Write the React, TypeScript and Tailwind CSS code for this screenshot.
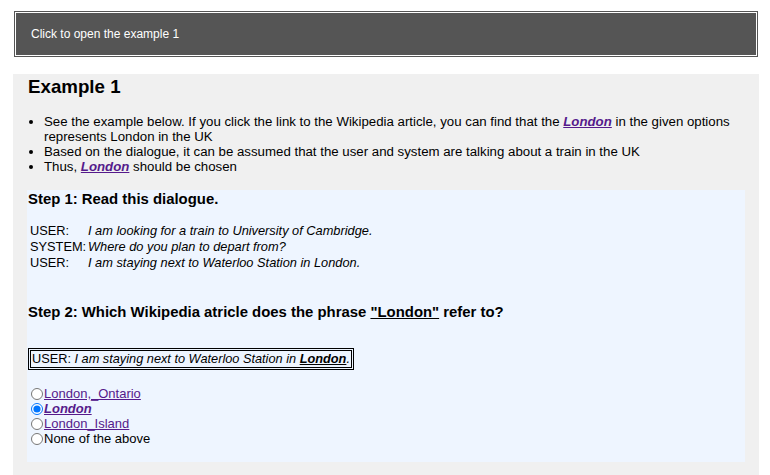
const DIALOGUE = [
  { speaker: 'USER:', text: 'I am looking for a train to University of Cambridge.' },
  { speaker: 'SYSTEM:', text: 'Where do you plan to depart from?' },
  { speaker: 'USER:', text: 'I am staying next to Waterloo Station in London.' },
];

const OPTIONS = [
  { id: 'opt1', label: 'London,_Ontario', link: true, checked: false },
  { id: 'opt2', label: 'London', link: true, checked: true },
  { id: 'opt3', label: 'London_Island', link: true, checked: false },
  { id: 'opt4', label: 'None of the above', link: false, checked: false },
];

export default function App() {
  return (
    <div className="min-h-[475px] bg-white text-black font-['Liberation_Sans',Arial,sans-serif] overflow-hidden">
      {/* Toggle bar */}
      <div className="pt-[11px] pl-[14px] w-[758px]">
        <div className="h-[46px] border-[3px] border-double border-[#555] bg-[#555] bg-clip-padding flex items-center pl-[14px] text-white text-[12px]">
          Click to open the example 1
        </div>
      </div>

      {/* Example panel */}
      <div className="mt-[17px] ml-[13px] w-[746px] bg-[#f0f0f0] pl-[14px] pr-[14px] pt-[2px] pb-[14px]">
        <h3 className="text-[18.72px] leading-[22px] font-bold pl-[1px]">Example 1</h3>

        <ul className="mt-[16px] list-disc pl-[17px] text-[13.25px] leading-[15px]">
          <li>
            See the example below. If you click the link to the Wikipedia article, you can find that the{' '}
            <a className="text-[#551a8b] underline font-bold italic">London</a> in the given options represents London in the UK
          </li>
          <li>Based on the dialogue, it can be assumed that the user and system are talking about a train in the UK</li>
          <li>
            Thus, <a className="text-[#551a8b] underline font-bold italic">London</a> should be chosen
          </li>
        </ul>

        <div className="mt-[16px] bg-[#eef5ff] pl-[1px] pb-[16px]">
          <h4 className="text-[14.9px] leading-[18px] font-bold">Step 1: Read this dialogue.</h4>

          <div className="mt-[15px] grid grid-cols-[58px_auto] pl-[2px] text-[12.8px] leading-[16px]">
            {DIALOGUE.map((row, i) => (
              <div key={i} className="contents">
                <span>{row.speaker}</span>
                <span className="italic">{row.text}</span>
              </div>
            ))}
          </div>

          <h4 className="mt-[32px] text-[14.9px] leading-[18px] font-bold">
            Step 2: Which Wikipedia atricle does the phrase <span className="underline">"London"</span> refer to?
          </h4>

          <div className="mt-[27px] inline-block border-[3px] border-double border-black px-[1px] text-[12.75px] leading-[16px]">
            USER: <span className="italic">I am staying next to Waterloo Station in </span>
            <span className="italic font-bold underline">London</span>
            <span className="italic">.</span>
          </div>

          <div className="mt-[16px] flex flex-col text-[13px] leading-[15px]">
            {OPTIONS.map((opt) => (
              <label key={opt.id} className="flex items-center">
                <input
                  type="radio"
                  name="entity"
                  defaultChecked={opt.checked}
                  className="m-0 ml-[3px] mr-[1px] w-[12px] h-[12px]"
                />
                {opt.link ? (
                  <a className={`text-[#551a8b] underline ${opt.checked ? 'font-bold italic' : ''}`}>{opt.label}</a>
                ) : (
                  <span>{opt.label}</span>
                )}
              </label>
            ))}
          </div>
        </div>
      </div>
    </div>
  );
}
